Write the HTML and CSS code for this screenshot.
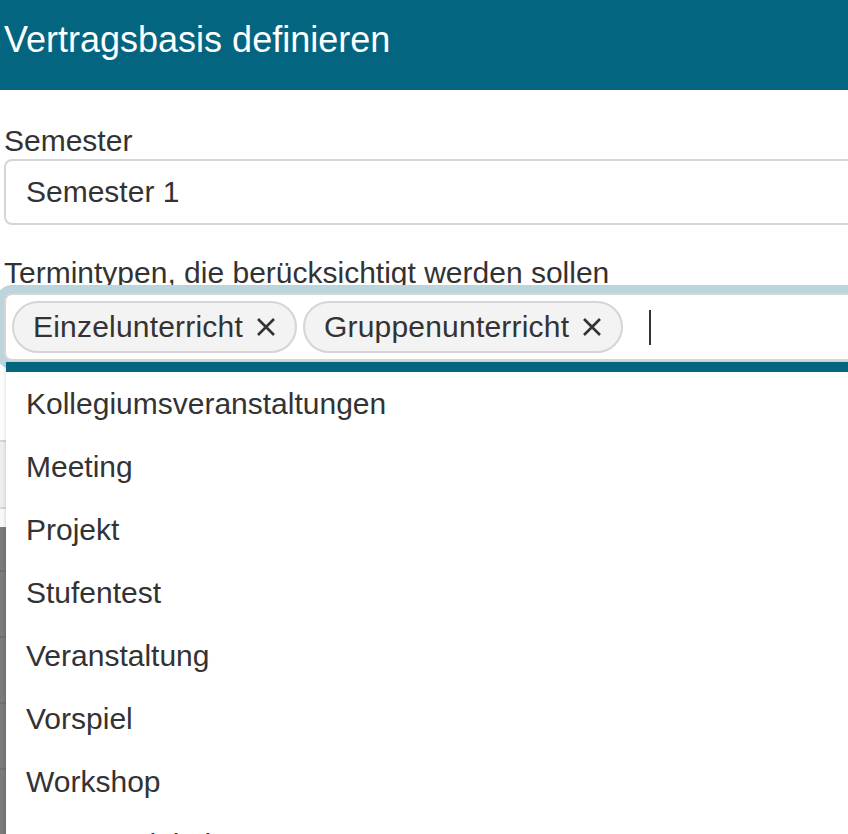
FILE: index.html
```html
<!DOCTYPE html>
<html lang="de">
  <head>
    <meta charset="UTF-8" />
    <meta name="viewport" content="width=device-width, initial-scale=1.0" />
    <title>Vertragsbasis definieren</title>
    <link rel="stylesheet" href="styles.css">
  </head>
  <body>
    <!-- Header -->
    <header class="modal-header">
      <h1 class="modal-title">Vertragsbasis definieren</h1>
    </header>

    <main class="modal-body">
      <div class="form-group">
        <label class="form-label">Semester</label>
        <div class="form-input">Semester 1</div>
      </div>

      <div class="form-group form-group-types">
        <label class="form-label">Termintypen, die berücksichtigt werden sollen</label>
        <div class="multiselect">
          <div class="tag-list">
            <span class="tag">
              Einzelunterricht
              <svg class="tag-remove" viewBox="0 0 20 20" width="20" height="20">
                <path d="M2 2 L18 18 M18 2 L2 18" />
              </svg>
            </span>
            <span class="tag">
              Gruppenunterricht
              <svg class="tag-remove" viewBox="0 0 20 20" width="20" height="20">
                <path d="M2 2 L18 18 M18 2 L2 18" />
              </svg>
            </span>
            <span class="caret"></span>
          </div>

          <ul class="dropdown">
            <li class="dropdown-item">Kollegiumsveranstaltungen</li>
            <li class="dropdown-item">Meeting</li>
            <li class="dropdown-item">Projekt</li>
            <li class="dropdown-item">Stufentest</li>
            <li class="dropdown-item">Veranstaltung</li>
            <li class="dropdown-item">Vorspiel</li>
            <li class="dropdown-item">Workshop</li>
            <li class="dropdown-item">Zusatztätigkeit</li>
          </ul>
        </div>
      </div>

      <!-- table underneath the open dropdown -->
      <div class="under-table">
        <div class="under-row under-row-head"></div>
        <div class="under-row under-row-space"></div>
        <div class="under-row under-row-dark"></div>
        <div class="under-row under-row-dark"></div>
        <div class="under-row under-row-dark"></div>
        <div class="under-row under-row-dark"></div>
        <div class="under-row under-row-dark"></div>
      </div>
    </main>
  </body>
</html>
```

FILE: styles.css
```css
* {
  margin: 0;
  padding: 0;
  box-sizing: border-box;
  font-family: "Liberation Sans", Arial, Helvetica, sans-serif;
}

:root {
  --primary: #03657f;
  --text: #333333;
  --border: #d5d5d5;
  --focus: #bcd4dc;
}

body {
  background: #ffffff;
  color: var(--text);
  overflow: hidden;
  width: 848px;
  height: 834px;
}

/* Header */
.modal-header {
  background: var(--primary);
  height: 90px;
  padding: 20px 4px 0;
  width: 900px;
}

.modal-title {
  color: #ffffff;
  font-size: 36px;
  font-weight: 400;
  line-height: 40px;
}

/* Body */
.modal-body {
  width: 900px;
  padding: 33px 0 0 4px;
}

.form-group {
  display: flex;
  flex-direction: column;
}

.form-group-types {
  margin-top: 30px;
}

.form-label {
  font-size: 30px;
  line-height: 36px;
}

.form-input {
  height: 66px;
  border: 2px solid var(--border);
  border-radius: 8px;
  padding: 0 20px;
  font-size: 30px;
  line-height: 62px;
}

.multiselect {
  position: relative;
  z-index: 2;
  margin-top: 2px;
  border: 2px solid var(--border);
  border-radius: 8px;
  box-shadow: 0 0 0 8px var(--focus);
  background: #ffffff;
}

.tag-list {
  display: flex;
  align-items: center;
  gap: 6px;
  padding: 6px;
}

.tag {
  display: inline-flex;
  align-items: center;
  height: 52px;
  padding: 0 19px 0 19px;
  border: 2px solid var(--border);
  border-radius: 26px;
  background: #f3f3f3;
  font-size: 30px;
  letter-spacing: 0.2px;
  white-space: nowrap;
}

.tag-remove {
  margin-left: 13px;
  fill: none;
  stroke: var(--text);
  stroke-width: 2.6;
}

.caret {
  width: 2px;
  height: 35px;
  margin-left: 20px;
  background: var(--text);
}

/* Open dropdown */
.dropdown {
  position: absolute;
  top: calc(100% + 3px);
  left: 0;
  width: 900px;
  list-style: none;
  background: #ffffff;
  border-top: 10px solid var(--primary);
  box-shadow: -1px 2px 3px rgba(0, 0, 0, 0.12);
}

.dropdown-item {
  padding: 10px 20px;
  font-size: 30px;
  line-height: 43px;
}

/* Table behind the dropdown */
.under-table {
  margin-left: -4px;
  margin-top: 79px;
}

.under-row {
  border-top: 2px solid #d6d6d6;
}

.under-row-head {
  height: 67px;
  background: #eeeeee;
}

.under-row-space {
  height: 20px;
  background: #f9f9f9;
}

.under-row-dark {
  height: 66px;
  background: #7b7b7b;
  border-top-color: #707070;
}

.under-row-space + .under-row-dark {
  height: 43px;
  border-top: none;
}
```
